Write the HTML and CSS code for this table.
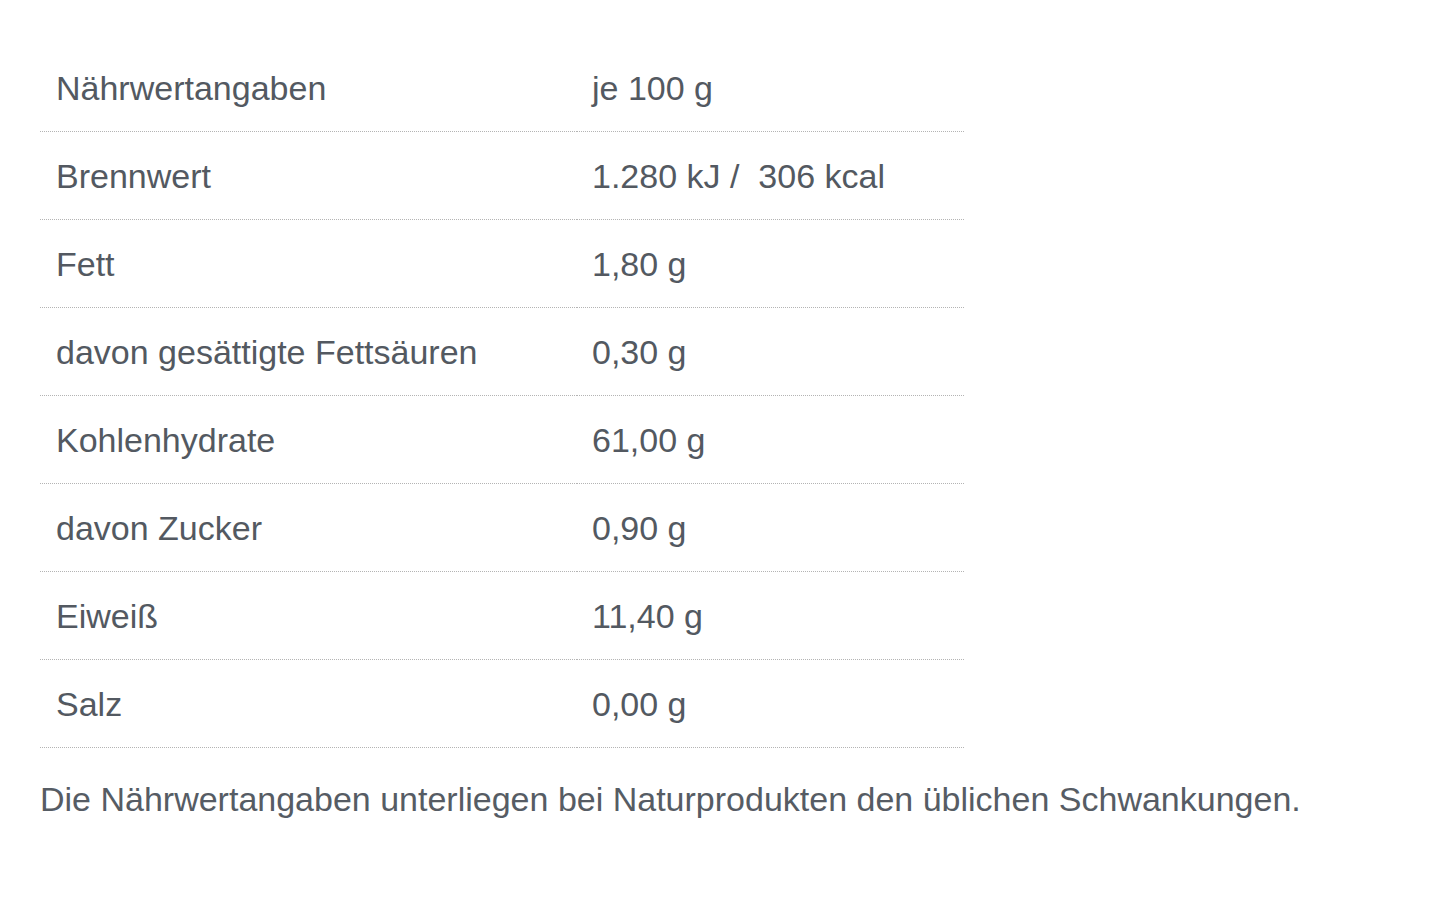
FILE: index.html
```html
<!DOCTYPE html>
<html lang="de">
<head>
<meta charset="utf-8">
<title>Nährwertangaben</title>
<link rel="stylesheet" href="styles.css">
</head>
<body>
<main class="page">
  <table class="nutrition">
    <tbody>
      <tr><td class="label">Nährwertangaben</td><td class="value">je 100 g</td></tr>
      <tr><td class="label">Brennwert</td><td class="value">1.280 kJ /&nbsp; 306 kcal</td></tr>
      <tr><td class="label">Fett</td><td class="value">1,80 g</td></tr>
      <tr><td class="label">davon gesättigte Fettsäuren</td><td class="value">0,30 g</td></tr>
      <tr><td class="label">Kohlenhydrate</td><td class="value">61,00 g</td></tr>
      <tr><td class="label">davon Zucker</td><td class="value">0,90 g</td></tr>
      <tr><td class="label">Eiweiß</td><td class="value">11,40 g</td></tr>
      <tr><td class="label">Salz</td><td class="value">0,00 g</td></tr>
    </tbody>
  </table>
  <p class="note">Die Nährwertangaben unterliegen bei Naturprodukten den üblichen Schwankungen.</p>
</main>
</body>
</html>
```

FILE: styles.css
```css
html, body {
  margin: 0;
  padding: 0;
  background: #ffffff;
}

body {
  font-family: "Liberation Sans", Arial, sans-serif;
  color: #535961;
  font-size: 34px;
}

.page {
  padding: 44px 40px 0 40px;
}

.nutrition {
  width: 924px;
  border-collapse: collapse;
  table-layout: fixed;
}

.nutrition td {
  height: 87px;
  padding: 0 16px;
  border-bottom: 1px dotted #b4b4b4;
  vertical-align: middle;
  line-height: 40px;
  white-space: nowrap;
}

.nutrition .label {
  width: 505px;
}

.nutrition .value {
  padding-left: 15px;
}

.note {
  margin: 31px 0 0 0;
  line-height: 40px;
  color: #565c64;
}
```
